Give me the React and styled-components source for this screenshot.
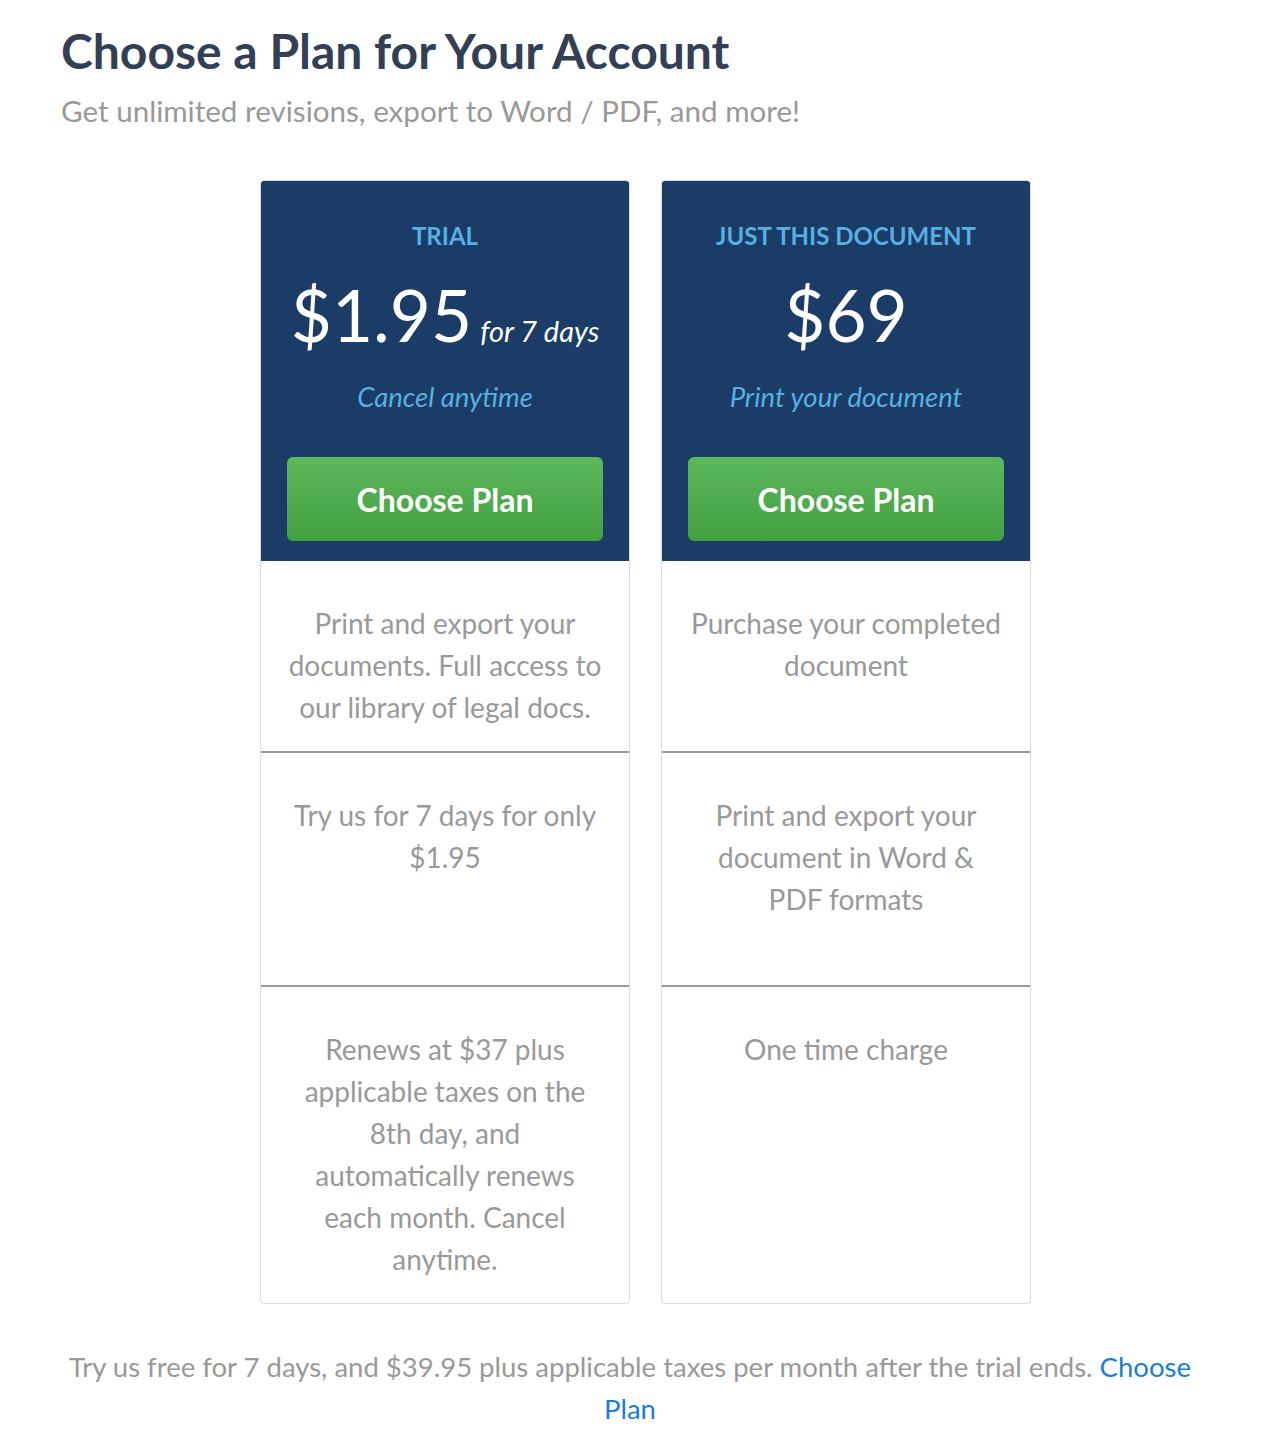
import React from "react";
import styled, { createGlobalStyle } from "styled-components";

const GlobalStyle = createGlobalStyle`
  body {
    margin: 0;
    background: #fff;
    font-family: Lato, "Open Sans", sans-serif;
  }
`;

const Page = styled.div`
  width: 1275px;
  padding: 20px 0 30px;
  box-sizing: border-box;
`;

const Heading = styled.div`
  padding-left: 61px;
`;

const Title = styled.h1`
  margin: 0;
  font-size: 48px;
  line-height: 62px;
  font-weight: 700;
  color: #333f54;
`;

const Subtitle = styled.div`
  margin-top: 9px;
  font-size: 29.6px;
  line-height: 40px;
  color: #999;
`;

const Cards = styled.div`
  display: flex;
  gap: 31px;
  margin: 49px 0 0 260px;
`;

const Card = styled.div`
  width: 370px;
  box-sizing: border-box;
  border: 1px solid #dcdcdc;
  border-radius: 4px;
  overflow: hidden;
  display: flex;
  flex-direction: column;
`;

const Header = styled.div`
  background: #1b3c66;
  padding: 40px 26px 20px;
  display: flex;
  flex-direction: column;
  align-items: center;
`;

const Label = styled.div`
  font-size: 24px;
  line-height: 30px;
  font-weight: 700;
  color: #57b0e2;
  text-transform: uppercase;
`;

const Price = styled.div`
  margin-top: 19px;
  height: 90px;
  display: flex;
  align-items: baseline;
  justify-content: center;
  color: #fff;
  font-size: 71px;
  line-height: 90px;
`;

const Period = styled.span`
  margin-left: 8px;
  font-size: 29px;
  font-style: italic;
`;

const Tagline = styled.div`
  margin-top: 17px;
  font-size: 27.5px;
  line-height: 40px;
  font-style: italic;
  color: #57b0e2;
`;

const ChooseButton = styled.button`
  margin-top: 40px;
  width: 100%;
  height: 84px;
  border: none;
  border-radius: 6px;
  background: linear-gradient(#5cb85c, #43a040);
  color: #fff;
  font-family: inherit;
  font-size: 32px;
  font-weight: 700;
  cursor: pointer;
`;

const Feature = styled.div`
  height: ${({ $height }) => $height}px;
  box-sizing: border-box;
  padding: 41px 12px 0;
  text-align: center;
  font-size: 28px;
  line-height: 42px;
  color: #999;
  & + & {
    border-top: 2px solid #9a9a9a;
  }
`;

const Line = styled.div`
  white-space: nowrap;
`;

const Footer = styled.p`
  width: 1140px;
  margin: 42px 0 0 60px;
  text-align: center;
  font-size: 27.5px;
  line-height: 42px;
  color: #999;
`;

const Link = styled.a`
  color: #1a7fd4;
  text-decoration: none;
`;

const plans = [
  {
    label: "Trial",
    price: "$1.95",
    period: "for 7 days",
    tagline: "Cancel anytime",
    features: [
      ["Print and export your", "documents. Full access to", "our library of legal docs."],
      ["Try us for 7 days for only", "$1.95"],
      [
        "Renews at $37 plus",
        "applicable taxes on the",
        "8th day, and",
        "automatically renews",
        "each month. Cancel",
        "anytime.",
      ],
    ],
  },
  {
    label: "Just this document",
    price: "$69",
    tagline: "Print your document",
    features: [
      ["Purchase your completed", "document"],
      ["Print and export your", "document in Word &", "PDF formats"],
      ["One time charge"],
    ],
  },
];

const rowHeights = [190, 234, 318];

export default function App() {
  return (
    <Page>
      <GlobalStyle />
      <Heading>
        <Title>Choose a Plan for Your Account</Title>
        <Subtitle>Get unlimited revisions, export to Word / PDF, and more!</Subtitle>
      </Heading>
      <Cards>
        {plans.map((plan) => (
          <Card key={plan.label}>
            <Header>
              <Label>{plan.label}</Label>
              <Price>
                {plan.price}
                {plan.period && <Period>{plan.period}</Period>}
              </Price>
              <Tagline>{plan.tagline}</Tagline>
              <ChooseButton>Choose Plan</ChooseButton>
            </Header>
            {plan.features.map((lines, i) => (
              <Feature key={i} $height={rowHeights[i]}>
                {lines.map((line) => (
                  <Line key={line}>{line}</Line>
                ))}
              </Feature>
            ))}
          </Card>
        ))}
      </Cards>
      <Footer>
        Try us free for 7 days, and $39.95 plus applicable taxes per month after the trial ends.{" "}
        <Link href="#">Choose Plan</Link>
      </Footer>
    </Page>
  );
}
